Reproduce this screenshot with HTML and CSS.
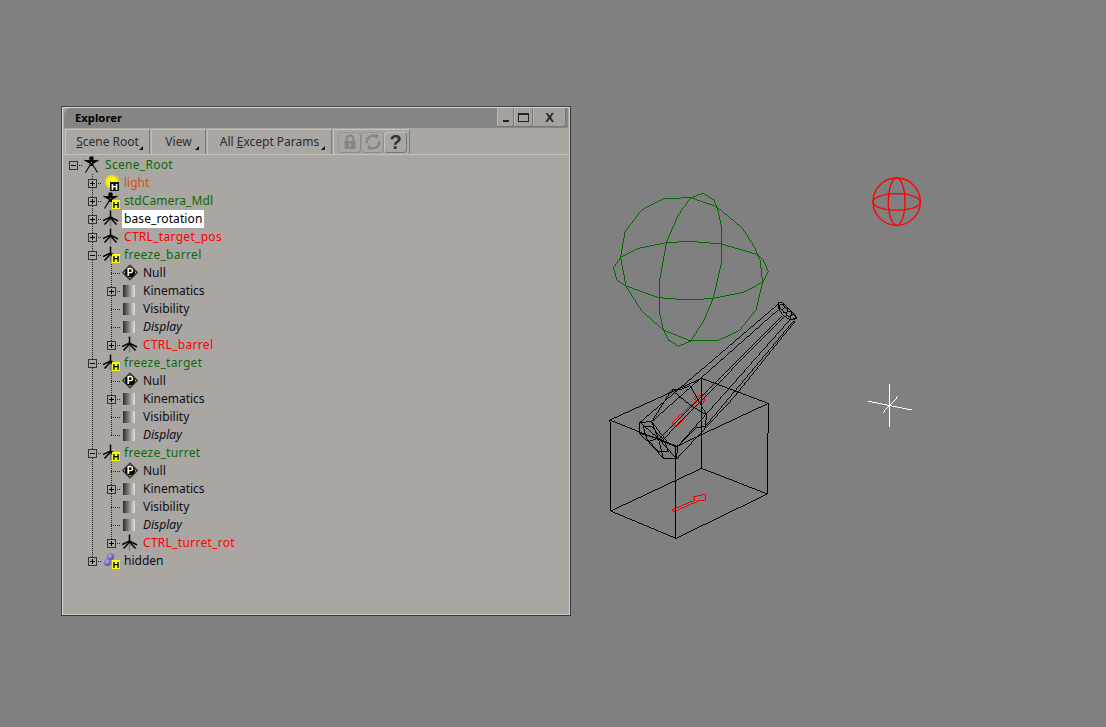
FILE: index.html
```html
<!DOCTYPE html>
<html lang="en">
<head>
<meta charset="utf-8">
<title>Explorer</title>
<link rel="stylesheet" href="styles.css">
</head>
<body>
<svg class="defs" width="0" height="0" aria-hidden="true">
  <symbol id="person" viewBox="0 0 16 17">
    <circle cx="7.5" cy="2.6" r="2.3" fill="#000"/>
    <path d="M0.5 4 L6.5 7.5 L8.5 7.5 L14.5 4 M6.3 5.5 L8.7 5.5 L9 9.5 L6 9.5 Z M6.2 9 L1.5 16.5 M8.8 9 L13.5 16.5" fill="#000" stroke="#000" stroke-width="1.1"/>
  </symbol>
  <symbol id="axis" viewBox="0 0 16 17">
    <path d="M7.5 0.5 L7.5 7.5 M0 10.5 L7.5 7 L15 11 M1.5 14.5 L7.5 8 L13.5 14.5" fill="none" stroke="#000" stroke-width="1.5"/>
    <circle cx="7.5" cy="8" r="1.6" fill="#000"/>
    <path d="M7.5 9.5 L7.5 16.5" stroke="#7a7876" stroke-width="1.4"/>
  </symbol>
  <symbol id="nullp" viewBox="0 0 16 16">
    <path d="M8 0.8 L15.2 8 L8 15.2 L0.8 8 Z" fill="#c8c5c1" stroke="#333" stroke-width="1.5" stroke-linejoin="round"/>
    <circle cx="8" cy="8" r="5" fill="#000"/>
  </symbol>
</svg>

<svg class="scene" viewBox="0 0 1106 727" width="1106" height="727" aria-hidden="true">
  <g transform="translate(600 185) scale(0.33333)" class="wire green">
    <polygon points="40,250 62,217 115,190 200,173 270,169 365,177 470,208 490,225 505,260 488,292 430,322 340,340 268,345 175,338 78,303 52,287"/>
    <polygon points="310,25 342,45 355,80 365,130 365,230 340,340 310,410 272,468 235,484 205,465 190,435 178,380 178,290 200,170 235,90 272,38"/>
    <polygon points="190,41 272,38 350,65 428,130 465,190 480,225 488,292 468,375 420,435 352,468 272,468 190,435 125,378 78,303 62,217 75,140 125,75"/>
  </g>
  <g transform="translate(600 295) scale(0.33333)" class="wire red">
    <polygon points="216,383 228,396 298,322 310,325 318,295 278,310 290,316"/>
    <polygon points="215,645 222,650 295,618 315,615 318,598 280,605 285,615"/>
  </g>
  <g transform="translate(600 295) scale(0.33333)" class="wire black">
    <path d="M30 375 L228 455 L505 325 L305 250 Z M32 648 L228 730 L502 597 L305 520 Z M30 375 L32 648 M228 455 L228 730 M505 325 L502 597 M305 250 L305 520"/>
    <path d="M120 382 L117 415 L145 440 L190 490 L230 492 L232 455 L205 445 L155 380 Z"/>
    <path d="M175 430 L120 382 M175 430 L117 415 M175 430 L155 380 M175 430 L205 445 M175 430 L190 490 M175 430 L230 492 M175 430 L145 440 M175 430 L232 455"/>
    <path d="M130 395 L155 395 L195 440 L205 470 L175 470 L140 430 Z"/>
    <path d="M120 382 L535 27 M155 380 L215 285 L245 282 L270 272 L320 360 L315 395 L290 398 L232 455 M215 285 L270 330 L320 360 M155 380 L535 44"/>
    <path d="M175 435 L545 64 M183 440 L550 67 M232 455 L570 74 M315 395 L580 79 M230 492 L400 309 L585 79"/>
    <polygon points="535,24 550,24 585,59 590,70 570,74 550,62 535,40"/>
    <circle cx="545" cy="35" r="8"/><circle cx="556" cy="46" r="8"/><circle cx="567" cy="56" r="8"/><circle cx="578" cy="66" r="8"/>
  </g>
  <g transform="translate(860 170) scale(0.33333)" class="wire red thick">
    <circle cx="110" cy="95" r="71"/>
    <ellipse cx="110" cy="96" rx="71" ry="25"/>
    <ellipse cx="110" cy="95" rx="25" ry="71"/>
  </g>
  <g transform="translate(860 380) scale(0.33333)" class="wire white">
    <path d="M90 12 L88 140 M25 64 L155 90 M115 48 L67 100"/>
  </g>
</svg>

<section class="window">
  <header class="titlebar">
    <h1 class="title">Explorer</h1>
    <div class="win-controls">
      <button class="win-btn min"><span class="min-glyph"></span></button>
      <button class="win-btn max"><span class="max-glyph"></span></button>
      <button class="win-btn close">X</button>
    </div>
  </header>
  <div class="toolbar">
    <button class="menu-btn scene-root"><u>S</u>cene Root</button>
    <button class="menu-btn view">View</button>
    <button class="menu-btn params">All <u>E</u>xcept Params</button>
    <div class="tools">
      <button class="tool-btn">
        <svg width="16" height="16" viewBox="0 0 16 16"><path d="M4.5 7 V5 a3.5 3.5 0 0 1 7 0 V7" fill="none" stroke="#888684" stroke-width="2"/><rect x="2.5" y="7" width="11" height="8" rx="1" fill="#888684"/><rect x="7" y="9.5" width="2" height="3" fill="#aaa6a2"/></svg>
      </button>
      <button class="tool-btn">
        <svg width="18" height="18" viewBox="0 0 18 18"><path d="M3 10 A6 6 0 0 1 12.5 4 M15 8 A6 6 0 0 1 5.5 14" fill="none" stroke="#888684" stroke-width="2.4"/><path d="M10.5 1 L15 2 L13 6.5 Z M7.5 17 L3 16 L5 11.5 Z" fill="#888684"/></svg>
      </button>
      <button class="tool-btn help">?</button>
    </div>
  </div>
  <div class="tree">
    <div class="row"><span class="c root"><i class="exp minus"></i></span><span class="ico"><svg class="i16"><use href="#person"/></svg></span><span class="label green">Scene_Root</span></div>

    <div class="row"><span class="c"></span><span class="c tee"><i class="exp plus"></i></span><span class="ico"><span class="bulb"></span><b class="h dark">H</b></span><span class="label orange">light</span></div>
    <div class="row"><span class="c"></span><span class="c tee"><i class="exp plus"></i></span><span class="ico"><svg class="i16"><use href="#person"/></svg><b class="h">H</b></span><span class="label green cam">stdCamera_Mdl</span></div>
    <div class="row"><span class="c"></span><span class="c tee"><i class="exp plus"></i></span><span class="ico"><svg class="i16"><use href="#axis"/></svg></span><span class="label selected">base_rotation</span></div>
    <div class="row"><span class="c"></span><span class="c tee"><i class="exp plus"></i></span><span class="ico"><svg class="i16"><use href="#axis"/></svg></span><span class="label red">CTRL_target_pos</span></div>

    <div class="row"><span class="c"></span><span class="c tee"><i class="exp minus"></i></span><span class="ico"><svg class="i16"><use href="#axis"/></svg><b class="h">H</b></span><span class="label green">freeze_barrel</span></div>
    <div class="row"><span class="c"></span><span class="c pipe"></span><span class="c tee"></span><span class="ico"><svg class="i16"><use href="#nullp"/></svg><b class="p">P</b></span><span class="label">Null</span></div>
    <div class="row"><span class="c"></span><span class="c pipe"></span><span class="c tee"><i class="exp plus"></i></span><span class="ico"><span class="ramp"></span></span><span class="label">Kinematics</span></div>
    <div class="row"><span class="c"></span><span class="c pipe"></span><span class="c tee"></span><span class="ico"><span class="ramp"></span></span><span class="label">Visibility</span></div>
    <div class="row"><span class="c"></span><span class="c pipe"></span><span class="c tee"></span><span class="ico"><span class="ramp"></span></span><span class="label ital">Display</span></div>
    <div class="row"><span class="c"></span><span class="c pipe"></span><span class="c end"><i class="exp plus"></i></span><span class="ico"><svg class="i16"><use href="#axis"/></svg></span><span class="label red">CTRL_barrel</span></div>

    <div class="row"><span class="c"></span><span class="c tee"><i class="exp minus"></i></span><span class="ico"><svg class="i16"><use href="#axis"/></svg><b class="h">H</b></span><span class="label green">freeze_target</span></div>
    <div class="row"><span class="c"></span><span class="c pipe"></span><span class="c tee"></span><span class="ico"><svg class="i16"><use href="#nullp"/></svg><b class="p">P</b></span><span class="label">Null</span></div>
    <div class="row"><span class="c"></span><span class="c pipe"></span><span class="c tee"><i class="exp plus"></i></span><span class="ico"><span class="ramp"></span></span><span class="label">Kinematics</span></div>
    <div class="row"><span class="c"></span><span class="c pipe"></span><span class="c tee"></span><span class="ico"><span class="ramp"></span></span><span class="label">Visibility</span></div>
    <div class="row"><span class="c"></span><span class="c pipe"></span><span class="c end"></span><span class="ico"><span class="ramp"></span></span><span class="label ital">Display</span></div>

    <div class="row"><span class="c"></span><span class="c tee"><i class="exp minus"></i></span><span class="ico"><svg class="i16"><use href="#axis"/></svg><b class="h">H</b></span><span class="label green">freeze_turret</span></div>
    <div class="row"><span class="c"></span><span class="c pipe"></span><span class="c tee"></span><span class="ico"><svg class="i16"><use href="#nullp"/></svg><b class="p">P</b></span><span class="label">Null</span></div>
    <div class="row"><span class="c"></span><span class="c pipe"></span><span class="c tee"><i class="exp plus"></i></span><span class="ico"><span class="ramp"></span></span><span class="label">Kinematics</span></div>
    <div class="row"><span class="c"></span><span class="c pipe"></span><span class="c tee"></span><span class="ico"><span class="ramp"></span></span><span class="label">Visibility</span></div>
    <div class="row"><span class="c"></span><span class="c pipe"></span><span class="c tee"></span><span class="ico"><span class="ramp"></span></span><span class="label ital">Display</span></div>
    <div class="row"><span class="c"></span><span class="c pipe"></span><span class="c end"><i class="exp plus"></i></span><span class="ico"><svg class="i16"><use href="#axis"/></svg></span><span class="label red">CTRL_turret_rot</span></div>

    <div class="row"><span class="c"></span><span class="c end"><i class="exp plus"></i></span><span class="ico"><span class="ball one"></span><span class="ball two"></span><b class="h">H</b></span><span class="label">hidden</span></div>
  </div>
</section>
</body>
</html>
```

FILE: styles.css
```css
* { box-sizing: border-box; }
html, body { margin: 0; height: 100%; }
body {
  position: relative;
  width: 1106px;
  height: 727px;
  overflow: hidden;
  background: #808080;
  font: 12px "Noto Sans", "Liberation Sans", sans-serif;
  color: #111;
}
button { font: inherit; color: inherit; padding: 0; cursor: default; }
.defs { position: absolute; }
.scene { position: absolute; left: 0; top: 0; }
.wire * { fill: none; stroke-width: 3; shape-rendering: crispEdges; }
.wire.green * { stroke: #006c00; }
.wire.black * { stroke: #000; }
.wire.red * { stroke: #f00; }
.wire.white * { stroke: #fff; }
.wire.thick * { stroke-width: 4; shape-rendering: auto; }

.window {
  position: absolute;
  left: 61px;
  top: 106px;
  width: 510px;
  height: 510px;
  background: #aaa6a2;
  border: 1px solid #444;
  border-right-color: #3a3a3a;
  border-bottom-color: #3a3a3a;
  box-shadow: inset 1px 1px 0 #d8d4d0, inset -1px -1px 0 #d0ccc8;
  padding: 1px 2px 0 2px;
  display: flex;
  flex-direction: column;
}
.titlebar {
  height: 20px;
  background: #878583;
  border-radius: 7px 0 0 0;
  display: flex;
  align-items: center;
  justify-content: space-between;
  flex: none;
}
.title {
  margin: 0 0 2px 11px;
  font-size: 11.3px;
  font-weight: 700;
  color: #000;
}
.win-controls { display: flex; align-self: stretch; margin-right: 2px; }
.win-btn {
  background: #a5a19d;
  border: 1px solid #bab6b2;
  border-right-color: #7a7876;
  border-bottom-color: #7a7876;
  border-top: 0;
  border-radius: 0 0 3px 3px;
  display: flex;
  align-items: center;
  justify-content: center;
  height: 19px;
}
.min { width: 17px; }
.max { width: 19px; }
.close { width: 33px; font: 700 13px "Liberation Sans", sans-serif; color: #222; }
.min-glyph { width: 6px; height: 2px; background: #222; margin-top: 7px; }
.max-glyph { width: 11px; height: 9px; border: 1px solid #222; border-top-width: 2px; }

.toolbar {
  display: flex;
  height: 27px;
  padding: 1px 0 0 1px;
  gap: 1px;
  border-bottom: 1px solid #c6c2be;
  flex: none;
}
.menu-btn {
  position: relative;
  height: 25px;
  background: #aaa6a2;
  border: 1px solid #c4c0bc;
  border-right-color: #7c7a78;
  border-bottom: 0;
  color: #2e2e2e;
  padding: 0 0 1px;
}
.menu-btn::after {
  content: "";
  position: absolute;
  right: 6px;
  bottom: 4px;
  border: 2.5px solid transparent;
  border-right-color: #111;
  border-bottom-color: #111;
}
.scene-root { width: 85px; }
.view { width: 55px; }
.params { width: 125px; }
.tools {
  display: flex;
  align-items: center;
  gap: 0;
  width: 77px;
  padding: 0 2px 0 4px;
  border: 1px solid #c4c0bc;
  border-right-color: #7c7a78;
  border-bottom: 0;
}
.tool-btn {
  width: 23px;
  height: 21px;
  flex: none;
  background: #aaa6a2;
  border: 1px solid #9a9693;
  border-right-color: #8e8c8a;
  border-bottom-color: #8e8c8a;
  border-radius: 4px;
  display: flex;
  align-items: center;
  justify-content: center;
}
.help {
  font: 700 20px "Liberation Sans", sans-serif;
  color: #333;
  border-color: #c4c0bc #7c7a78 #7c7a78 #c4c0bc;
}

.tree { padding-top: 1px; flex: 1; }
.row { display: flex; height: 18px; align-items: stretch; }
.c { position: relative; width: 19px; flex: none; }
.pipe, .tee, .end, .root { background-repeat: no-repeat; }
.pipe {
  background-image: repeating-linear-gradient(to bottom, #222 0 1px, transparent 1px 2px);
  background-size: 1px 100%;
  background-position: 9px 0;
}
.tee {
  background-image:
    repeating-linear-gradient(to bottom, #222 0 1px, transparent 1px 2px),
    repeating-linear-gradient(to right, #222 0 1px, transparent 1px 2px);
  background-size: 1px 100%, 10px 1px;
  background-position: 9px 0, 9px 9px;
}
.end {
  background-image:
    repeating-linear-gradient(to bottom, #222 0 1px, transparent 1px 2px),
    repeating-linear-gradient(to right, #222 0 1px, transparent 1px 2px);
  background-size: 1px 10px, 10px 1px;
  background-position: 9px 0, 9px 9px;
}
.root {
  background-image: repeating-linear-gradient(to right, #222 0 1px, transparent 1px 2px);
  background-size: 10px 1px;
  background-position: 9px 9px;
}
.exp {
  position: absolute;
  left: 5px;
  top: 5px;
  width: 9px;
  height: 9px;
  background: #aaa6a2;
  border: 1px solid #333;
}
.exp::before {
  content: "";
  position: absolute;
  left: 1px;
  top: 3px;
  width: 5px;
  height: 1px;
  background: #000;
}
.plus::after {
  content: "";
  position: absolute;
  left: 3px;
  top: 1px;
  width: 1px;
  height: 5px;
  background: #000;
}
.ico {
  position: relative;
  width: 20px;
  flex: none;
}
.i16 { position: absolute; left: 1px; top: 0; width: 16px; height: 17px; }
.p {
  position: absolute;
  left: 1px;
  top: 0;
  width: 16px;
  font: 700 10px/17px "Liberation Sans", sans-serif;
  text-align: center;
  color: #fff;
}
.ramp {
  position: absolute;
  left: 2px;
  top: 3px;
  width: 12px;
  height: 12px;
  background: linear-gradient(to right, #2c2c2c, #e4e2e0);
}
.bulb {
  position: absolute;
  left: 2px;
  top: 0;
  width: 16px;
  height: 16px;
  border-radius: 50%;
  background: radial-gradient(circle closest-side, #ffff00 0 55%, #d8d430 80%, transparent 100%);
}
.ball {
  position: absolute;
  width: 7px;
  height: 7px;
  border-radius: 50%;
  background: radial-gradient(circle at 40% 35%, #b9b0ea, #5a4cae 70%);
}
.ball.one { left: 5px; top: 1px; }
.ball.two { left: 2px; top: 7px; }
.h {
  position: absolute;
  left: 10px;
  top: 8px;
  width: 8px;
  height: 9px;
  font: 700 9.5px/9px "Liberation Sans", sans-serif;
  text-align: center;
  background: #ffff00;
  color: #000;
}
.h.dark { left: 8px; width: 9px; background: #111; color: #fff; }
.label {
  padding: 0 2px;
  line-height: 18px;
  white-space: nowrap;
  color: #0c0c18;
}
.label.green { color: #0b6a0b; letter-spacing: .3px; }
.label.red { color: #f00; letter-spacing: .3px; }
.label.cam { letter-spacing: .1px; }
.label.orange { color: #d2501a; }
.label.selected { background: #fff; color: #000; letter-spacing: .1px; }
.label.ital { font-style: italic; }
```
